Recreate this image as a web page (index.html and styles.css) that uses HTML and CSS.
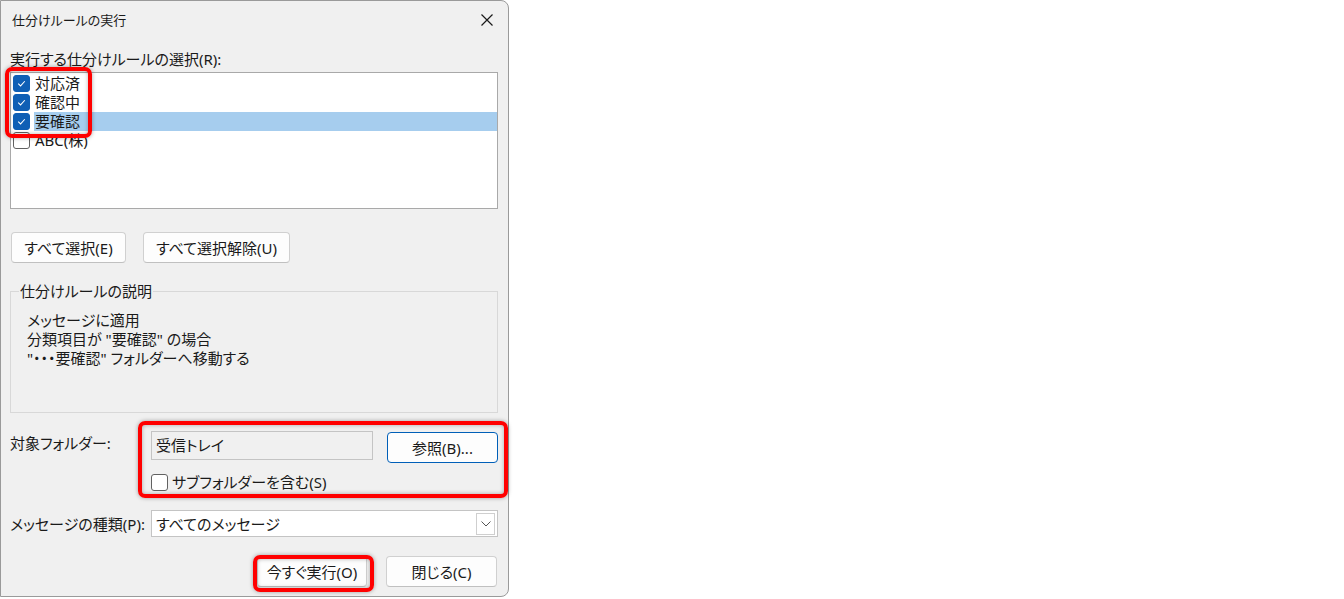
FILE: index.html
```html
<!DOCTYPE html>
<html lang="ja">
<head>
<meta charset="utf-8">
<title>仕分けルールの実行</title>
<link rel="stylesheet" href="styles.css">
</head>
<body>
<div class="dialog">
  <div class="titlebar">
    <span class="title">仕分けルールの実行</span>
    <svg class="close" width="12" height="12" viewBox="0 0 12 12"><path d="M0.5 0.5 L11.5 11.5 M11.5 0.5 L0.5 11.5" stroke="#1a1a1a" stroke-width="1.2" fill="none"/></svg>
  </div>
  <div class="body">
    <div class="label-top">実行する仕分けルールの選択(R):</div>
    <div class="listbox">
      <div class="row"><span class="cb on"><svg viewBox="0 0 16 16"><path d="M4.5 8.2 L7 10.6 L11.5 5.6" stroke="#fff" stroke-width="1.1" fill="none"/></svg></span><span class="rtext">対応済</span></div>
      <div class="row"><span class="cb on"><svg viewBox="0 0 16 16"><path d="M4.5 8.2 L7 10.6 L11.5 5.6" stroke="#fff" stroke-width="1.1" fill="none"/></svg></span><span class="rtext">確認中</span></div>
      <div class="row sel"><span class="cb on"><svg viewBox="0 0 16 16"><path d="M4.5 8.2 L7 10.6 L11.5 5.6" stroke="#fff" stroke-width="1.1" fill="none"/></svg></span><span class="rtext">要確認</span></div>
      <div class="row"><span class="cb"></span><span class="rtext">ABC(株)</span></div>
    </div>
    <div class="btnrow">
      <button class="btn w115">すべて選択(E)</button>
      <button class="btn w147">すべて選択解除(U)</button>
    </div>
    <fieldset class="group">
      <legend>仕分けルールの説明</legend>
      <div class="desc">メッセージに適用</div>
      <div class="desc">分類項目が "要確認" の場合</div>
      <div class="desc">"・・・要確認" フォルダーへ移動する</div>
    </fieldset>
    <div class="folder">
      <div class="flabel">対象フォルダー:</div>
      <div class="fcol">
        <div class="frow">
          <div class="textbox">受信トレイ</div>
          <button class="btn default w111">参照(B)...</button>
        </div>
        <div class="subrow"><span class="cb"></span><span>サブフォルダーを含む(S)</span></div>
      </div>
    </div>
    <div class="typerow">
      <div class="flabel">メッセージの種類(P):</div>
      <div class="combo">
        <span>すべてのメッセージ</span>
        <span class="drop"><svg width="10" height="6" viewBox="0 0 10 6"><path d="M0.5 0.5 L5 5 L9.5 0.5" stroke="#555" stroke-width="1" fill="none"/></svg></span>
      </div>
    </div>
    <div class="footer">
      <button class="btn w110">今すぐ実行(O)</button>
      <button class="btn w111">閉じる(C)</button>
    </div>
  </div>
  <div class="mark m1"></div>
  <div class="mark m2"></div>
  <div class="mark m3"></div>
</div>
</body>
</html>
```
FILE: styles.css
```css
html, body {
  margin: 0;
  padding: 0;
  background: #ffffff;
}
body {
  font-family: "Noto Sans", "Noto Sans CJK JP", sans-serif;
  font-feature-settings: "palt";
  font-size: 15px;
  color: #1a1a1a;
}
.dialog {
  position: relative;
  width: 509px;
  height: 597px;
  background: #f0f0f0;
  border: 1px solid #9a9a9a;
  border-radius: 0 8px 8px 0;
  box-sizing: border-box;
}
.titlebar {
  height: 37px;
  display: flex;
  align-items: center;
  justify-content: space-between;
  padding: 0 15px 0 11px;
  box-sizing: border-box;
}
.title {
  font-size: 13px;
}
.close {
  display: block;
}
.body {
  padding: 0 10px 0 9px;
}
.label-top {
  margin-top: 11px;
  height: 20px;
  line-height: 20px;
}
.listbox {
  margin-top: 3px;
  height: 137px;
  background: #fff;
  border: 1px solid #a9a9a9;
  box-sizing: border-box;
  padding-top: 1px;
}
.row {
  height: 19px;
  display: flex;
  align-items: center;
  padding-left: 2px;
}
.cb {
  width: 17px;
  height: 17px;
  box-sizing: border-box;
  border: 1px solid #616161;
  border-radius: 3px;
  background: #fff;
  flex: none;
  display: block;
}
.cb.on {
  background: #0f5fb5;
  border-color: #0f5fb5;
}
.cb svg {
  display: block;
  width: 15px;
  height: 15px;
}
.rtext {
  margin-left: 4px;
  height: 19px;
  line-height: 19px;
  padding-left: 1px;
  flex: 1;
}
.row.sel .rtext {
  background: #a6cdee;
}
.btnrow {
  margin-top: 23px;
  display: flex;
  gap: 17px;
  padding-left: 1px;
}
.btn {
  font-family: inherit;
  font-feature-settings: "palt";
  font-size: 15px;
  color: #1a1a1a;
  height: 31px;
  background: #fdfdfd;
  border: 1px solid #d0d0d0;
  border-bottom-color: #c0c0c0;
  border-radius: 4px;
  padding: 0;
  box-sizing: border-box;
}
.btn.default {
  border: 1px solid #005fb8;
  background: #fdfdfd;
}
.w115 { width: 115px; }
.w147 { width: 147px; }
.w110 { width: 110px; }
.w111 { width: 111px; }
.group {
  margin: 19px 0 0 0;
  padding: 11px 0 0 16px;
  height: 131px;
  box-sizing: border-box;
  border: 1px solid #d8d8d8;
  border-radius: 0;
}
.group legend {
  padding: 0 1px;
  margin-left: -8px;
  line-height: 18px;
}
.desc {
  height: 19px;
  line-height: 19px;
}
.folder {
  margin-top: 18px;
  display: flex;
}
.flabel {
  width: 141px;
  flex: none;
  line-height: 20px;
}
.folder .flabel {
  margin-top: 2px;
}
.fcol {
  flex: 1;
}
.frow {
  display: flex;
  justify-content: space-between;
  align-items: flex-start;
}
.textbox {
  width: 222px;
  height: 29px;
  box-sizing: border-box;
  border: 1px solid #c4c4c4;
  background: #f0f0f0;
  padding-left: 4px;
  line-height: 26px;
}
.frow .btn {
  margin-top: 1px;
}
.subrow {
  margin-top: 9px;
  display: flex;
  align-items: center;
  gap: 4px;
  line-height: 20px;
}
.typerow {
  margin-top: 18px;
  display: flex;
  align-items: center;
}
.combo {
  flex: 1;
  height: 27px;
  box-sizing: border-box;
  background: #fff;
  border: 1px solid #c4c4c4;
  display: flex;
  align-items: center;
  justify-content: space-between;
  padding: 0 2px 0 4px;
}
.drop {
  width: 19px;
  height: 22px;
  box-sizing: border-box;
  border: 1px solid #cfcfcf;
  background: #fff;
  display: flex;
  align-items: center;
  justify-content: center;
}
.footer {
  margin-top: 19px;
  display: flex;
  justify-content: flex-end;
  gap: 19px;
  padding-right: 1px;
}
.mark {
  position: absolute;
  border: 4px solid #ff0000;
  border-radius: 7px;
  box-sizing: border-box;
  box-shadow: 0 0 4px rgba(0,0,0,0.35), inset 0 0 4px rgba(0,0,0,0.3);
}
.m1 { left: 4px; top: 66px; width: 87px; height: 71px; }
.m2 { left: 137px; top: 420px; width: 370px; height: 77px; }
.m3 { left: 252px; top: 554px; width: 121px; height: 37px; }
```
